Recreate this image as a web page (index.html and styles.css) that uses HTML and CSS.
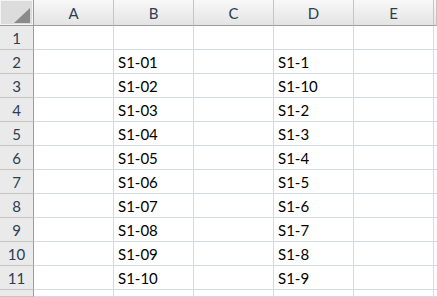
FILE: index.html
```html
<!DOCTYPE html>
<html>
<head>
<meta charset="utf-8">
<link rel="stylesheet" href="styles.css">
</head>
<body>
<div class="sheet">
  <div class="corner"><span class="tri"></span></div>
  <div class="ch">A</div><div class="ch">B</div><div class="ch">C</div><div class="ch">D</div><div class="ch">E</div><div class="ch"></div>

  <div class="rh">1</div><div class="c"></div><div class="c"></div><div class="c"></div><div class="c"></div><div class="c"></div><div class="c"></div>
  <div class="rh">2</div><div class="c"></div><div class="c">S1-01</div><div class="c"></div><div class="c">S1-1</div><div class="c"></div><div class="c"></div>
  <div class="rh">3</div><div class="c"></div><div class="c">S1-02</div><div class="c"></div><div class="c">S1-10</div><div class="c"></div><div class="c"></div>
  <div class="rh">4</div><div class="c"></div><div class="c">S1-03</div><div class="c"></div><div class="c">S1-2</div><div class="c"></div><div class="c"></div>
  <div class="rh">5</div><div class="c"></div><div class="c">S1-04</div><div class="c"></div><div class="c">S1-3</div><div class="c"></div><div class="c"></div>
  <div class="rh">6</div><div class="c"></div><div class="c">S1-05</div><div class="c"></div><div class="c">S1-4</div><div class="c"></div><div class="c"></div>
  <div class="rh">7</div><div class="c"></div><div class="c">S1-06</div><div class="c"></div><div class="c">S1-5</div><div class="c"></div><div class="c"></div>
  <div class="rh">8</div><div class="c"></div><div class="c">S1-07</div><div class="c"></div><div class="c">S1-6</div><div class="c"></div><div class="c"></div>
  <div class="rh">9</div><div class="c"></div><div class="c">S1-08</div><div class="c"></div><div class="c">S1-7</div><div class="c"></div><div class="c"></div>
  <div class="rh">10</div><div class="c"></div><div class="c">S1-09</div><div class="c"></div><div class="c">S1-8</div><div class="c"></div><div class="c"></div>
  <div class="rh">11</div><div class="c"></div><div class="c">S1-10</div><div class="c"></div><div class="c">S1-9</div><div class="c"></div><div class="c"></div>
  <div class="rh"></div><div class="c"></div><div class="c"></div><div class="c"></div><div class="c"></div><div class="c"></div><div class="c"></div>
</div>
</body>
</html>
```

FILE: styles.css
```css
html, body {
  margin: 0;
  padding: 0;
  background: #ffffff;
  overflow: hidden;
}
* {
  box-sizing: border-box;
}
.sheet {
  display: grid;
  grid-template-columns: 34px 80px 80px 80px 80px 80px 3px;
  grid-template-rows: 26px repeat(11, 24px) 7px;
  width: 437px;
  height: 297px;
  overflow: hidden;
  font-family: Lato, "Noto Sans", sans-serif;
  font-size: 15px;
}
.corner {
  background: #dcdcdc;
  border-right: 1px solid #9c9c9c;
  border-bottom: 1px solid #9c9c9c;
  box-shadow: inset 1px 1px 0 #f4f4f4, inset -1px -1px 0 #f4f4f4;
  position: relative;
}
.tri {
  position: absolute;
  left: 14px;
  top: 8px;
  width: 0;
  height: 0;
  border-left: 16px solid transparent;
  border-bottom: 15px solid #8a8a8a;
}
.ch {
  background: linear-gradient(#f8f8f8, #e4e4e4);
  border-right: 1px solid #c5c5c5;
  border-bottom: 1px solid #9c9c9c;
  display: flex;
  align-items: center;
  justify-content: center;
  color: #2b3e54;
}
.rh {
  background: #eaeaea;
  border-right: 1px solid #9c9c9c;
  border-bottom: 1px solid #c5c5c5;
  display: flex;
  align-items: center;
  justify-content: center;
  color: #2b3e54;
}
.c {
  border-right: 1px solid #d4d9e3;
  border-bottom: 1px solid #d4d9e3;
  display: flex;
  align-items: center;
  padding-left: 4px;
  padding-top: 1px;
  color: #000000;
  white-space: nowrap;
  overflow: hidden;
}
```
